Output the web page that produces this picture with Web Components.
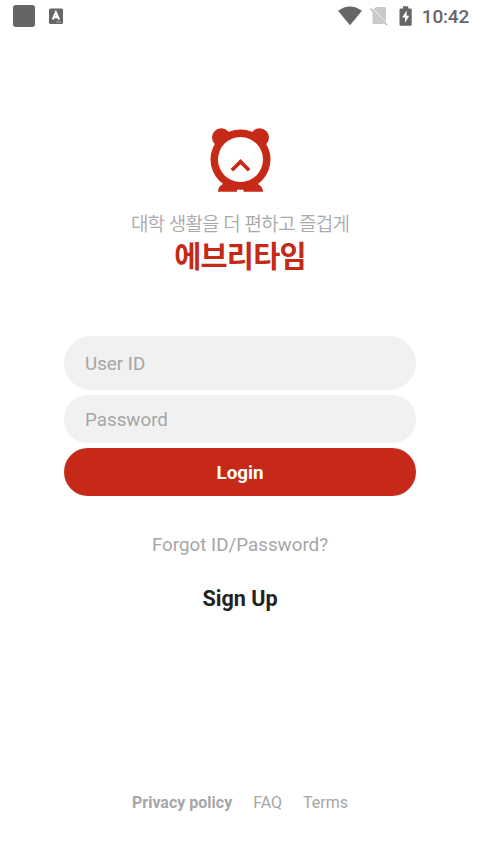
<!DOCTYPE html>
<html lang="ko">
<head>
<meta charset="utf-8">
<meta name="viewport" content="width=device-width, initial-scale=1">
<title>에브리타임</title>
<style>
html, body { margin: 0; height: 100%; background: #fff; overflow: hidden; }
body { font-family: Roboto, "Noto Sans CJK KR", sans-serif; }
</style>
</head>
<body>
<login-screen></login-screen>
<script>
const define = (name, html) => customElements.define(name, class extends HTMLElement {
  constructor() {
    super();
    this.attachShadow({ mode: "open" }).innerHTML = html;
  }
});

define("status-bar", `
<style>
:host { display: flex; align-items: center; justify-content: space-between; height: 32px; padding: 0 11px 0 13px; box-sizing: border-box; color: #666; }
.group { display: flex; align-items: center; }
svg { display: block; }
.time { font-size: 19px; line-height: 32px; font-weight: 500; letter-spacing: -.2px; margin-left: 9px; padding-top: 1px; }
</style>
<div class="group">
  <svg width="60" height="32" viewBox="13 0 60 32">
    <rect x="13" y="5" width="22" height="22" rx="3" fill="#656565"/>
    <rect x="49" y="8.500" width="14" height="15.500" rx="1.500" fill="#666"/>
    <path d="M52.700 19.500 55.900 12.300 59.100 19.500M53.900 17.300h4" fill="none" stroke="#fff" stroke-width="2"/>
    <path d="M56 22h5" stroke="#aaa" stroke-width="1"/>
  </svg>
</div>
<div class="group">
  <svg width="76" height="32" viewBox="337 0 76 32">
    <path d="M338 10.800Q350 2.200 362 10.800L350 25.300Z" fill="#666"/>
    <path d="M376 7H384.500Q386 7 386 8.500V22.300L373.500 9.300Z" fill="#c9c9c9"/>
    <path d="M372.500 11.500 384.500 24H374Q372.500 24 372.500 22.500Z" fill="#c9c9c9"/>
    <path d="M370.500 8.500 387 25" stroke="#b5b5b5" stroke-width="1.500"/>
    <path d="M403 6.200h5.200v2.200h2.200q1.300 0 1.300 1.300v14.800q0 1.300-1.300 1.300h-9.600q-1.300 0-1.300-1.300V9.700q0-1.300 1.300-1.300h2.200Z" fill="#666"/>
    <path d="M406.600 10.500 402.200 17.500H405V22.800L409.300 15.700H406.600Z" fill="#fff"/>
  </svg>
  <span class="time">10:42</span>
</div>`);

define("brand-header", `
<style>
:host { display: flex; flex-direction: column; align-items: center; padding-top: 94px; }
svg { display: block; }
p { margin: 0; white-space: nowrap; font-family: "Noto Sans CJK KR", sans-serif; }
.tagline { margin-top: 15px; font-size: 19px; line-height: 28px; font-weight: 350; letter-spacing: -.8px; color: #a9a9a9; }
.name { margin-top: -1px; font-size: 29.500px; line-height: 37px; font-weight: 700; letter-spacing: -.800px; color: #c62917; }
</style>
<svg width="62" height="68" viewBox="209 126 62 68">
  <g fill="#c62917">
    <circle cx="221.300" cy="137.500" r="9.300"/>
    <circle cx="259.700" cy="137.500" r="9.300"/>
    <circle cx="240.500" cy="159.500" r="30"/>
    <path d="M224 183.500Q218 186 218 191.800H237V189.400H243.500V191.800H263.200Q262.500 186 257 183.500Z"/>
  </g>
  <circle cx="240.500" cy="159.500" r="22.500" fill="#fff"/>
  <path d="M231.900 170.200 240.500 161.700 249.100 170.200" fill="none" stroke="#c62917" stroke-width="3.700"/>
</svg>
<p class="tagline">대학 생활을 더 편하고 즐겁게</p>
<p class="name">에브리타임</p>`);

define("text-field", `
<style>
:host { display: flex; align-items: center; height: 48px; padding: 2px 21px 0; box-sizing: border-box; border-radius: 27px; background: #f1f1f1; color: #a6a6a6; font-size: 18.800px; }
:host([tall]) { height: 53.500px; }
</style>
<slot></slot>`);

define("primary-button", `
<style>
:host { display: flex; align-items: center; justify-content: center; height: 48px; padding-top: 2px; box-sizing: border-box; border-radius: 24px; background: #c62917; color: #fff; font-size: 18.800px; font-weight: 700; }
</style>
<slot></slot>`);

define("footer-links", `
<style>
:host { display: flex; justify-content: center; gap: 21px; font-size: 16px; line-height: 20px; color: #a6a6a6; }
</style>
<slot></slot>`);

define("login-screen", `
<style>
:host { display: flex; flex-direction: column; width: 480px; height: 854px; background: #fff; }
.form { display: flex; flex-direction: column; margin: 63px 64px 0; }
text-field + text-field { margin-top: 5.500px; }
primary-button { margin-top: 5px; }
.forgot, .signup { align-self: center; white-space: nowrap; }
.forgot { margin-top: 37px; font-size: 18.800px; line-height: 24px; color: #a6a6a6; }
.signup { margin-top: 28px; font-size: 21.600px; line-height: 28px; font-weight: 700; color: #222; }
footer-links { margin-top: auto; margin-bottom: 41px; }
</style>
<status-bar></status-bar>
<brand-header></brand-header>
<div class="form">
  <text-field tall>User ID</text-field>
  <text-field>Password</text-field>
  <primary-button>Login</primary-button>
</div>
<span class="forgot">Forgot ID/Password?</span>
<span class="signup">Sign Up</span>
<footer-links><b>Privacy policy</b><span>FAQ</span><span>Terms</span></footer-links>`);
</script>
</body>
</html>
